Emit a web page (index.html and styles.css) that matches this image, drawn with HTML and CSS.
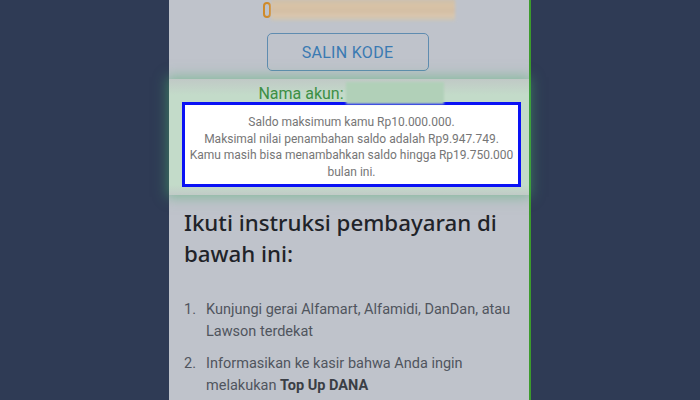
FILE: index.html
```html
<!DOCTYPE html>
<html lang="id">
<head>
<meta charset="utf-8">
<title>Top Up DANA</title>
<link rel="stylesheet" href="styles.css">
</head>
<body>
<div class="phone">
  <div class="code-row">
    <span class="code-pill"></span>
    <span class="code-blur"></span>
  </div>
  <div class="btn-row">
    <div class="copy-btn">SALIN KODE</div>
  </div>
  <div class="glow-zone">
    <div class="name-row">
      <span class="name-label">Nama akun:</span>
      <span class="name-blur"></span>
    </div>
    <div class="notice">
      <p>Saldo maksimum kamu Rp10.000.000.</p>
      <p>Maksimal nilai penambahan saldo adalah Rp9.947.749.</p>
      <p>Kamu masih bisa menambahkan saldo hingga Rp19.750.000 bulan ini.</p>
    </div>
  </div>
  <h2 class="heading">Ikuti instruksi pembayaran di bawah ini:</h2>
  <ol class="steps">
    <li><span class="num">1.</span><span class="txt">Kunjungi gerai Alfamart, Alfamidi, DanDan, atau Lawson terdekat</span></li>
    <li><span class="num">2.</span><span class="txt">Informasikan ke kasir bahwa Anda ingin melakukan <b>Top Up DANA</b></span></li>
  </ol>
</div>
</body>
</html>
```
FILE: styles.css
```css
html, body {
  margin: 0;
  padding: 0;
}
body {
  background: #2f3b55;
  width: 700px;
  height: 400px;
  overflow: hidden;
}
.phone {
  margin-left: 169px;
  width: 360px;
  height: 400px;
  background: #bfc3cb;
  border-right: 2px solid #3c9a2c;
  display: flex;
  flex-direction: column;
  font-family: Roboto, "Liberation Sans", sans-serif;
}
.phone > * {
  flex-shrink: 0;
}
.code-row {
  height: 22px;
  display: flex;
  align-items: center;
  padding-left: 94px;
}
.code-pill {
  box-sizing: border-box;
  width: 8px;
  height: 16px;
  border: 2px solid #cf8a2a;
  border-radius: 4px;
  margin-top: -2px;
}
.code-blur {
  width: 184px;
  height: 22px;
  margin-top: -2px;
  background: linear-gradient(180deg, #cdbfa9 0%, #dcc3a2 30%, #d6bea0 55%, #dec7aa 75%, #c6c4bb 100%);
  filter: blur(1.5px);
  opacity: 0.9;
}
.btn-row {
  display: flex;
  justify-content: center;
  margin-top: 11px;
  padding-right: 3px;
}
.copy-btn {
  box-sizing: border-box;
  width: 162px;
  height: 38px;
  border: 1.5px solid #5f8cb0;
  border-radius: 5px;
  display: flex;
  align-items: center;
  justify-content: center;
  color: #3a7ab2;
  font-size: 16px;
  letter-spacing: 0.3px;
}
.glow-zone {
  margin-top: 8px;
  padding: 3px 0 8px;
  background: linear-gradient(180deg, #c0c9c6 0px, #c3dbc9 16px, #c3dbc9 calc(100% - 10px), #c1cbc7 100%);
  box-shadow: 0 0 12px 2px rgba(70, 175, 105, 0.5);
}
.name-row {
  display: flex;
  justify-content: center;
  align-items: center;
  height: 22px;
  padding-left: 4px;
}
.name-label {
  color: #3c8f45;
  font-size: 16px;
}
.name-blur {
  width: 98px;
  height: 22px;
  margin-left: 2px;
  background: #b1d0b8;
  filter: blur(1px);
}
.notice {
  margin: -2px 8px 0 13px;
  border: 3px solid #0a12f5;
  background: #ffffff;
  padding: 9px 2px 4px;
  text-align: center;
  color: #767676;
  font-size: 12px;
  line-height: 16.6px;
}
.notice p {
  margin: 0;
}
.heading {
  margin: 11.5px 20px 0 15px;
  font-family: "Noto Sans", "Open Sans", sans-serif;
  font-weight: 500;
  font-size: 22.3px;
  line-height: 31px;
  color: #1f2329;
}
.steps {
  list-style: none;
  margin: 30.5px 10px 0 15px;
  padding: 0;
  color: #50555e;
  font-size: 14.5px;
  line-height: 22px;
}
.steps li {
  display: flex;
  margin-bottom: 10px;
}
.num {
  width: 22px;
  flex: none;
}
.steps b {
  color: #3a3e45;
}
```
